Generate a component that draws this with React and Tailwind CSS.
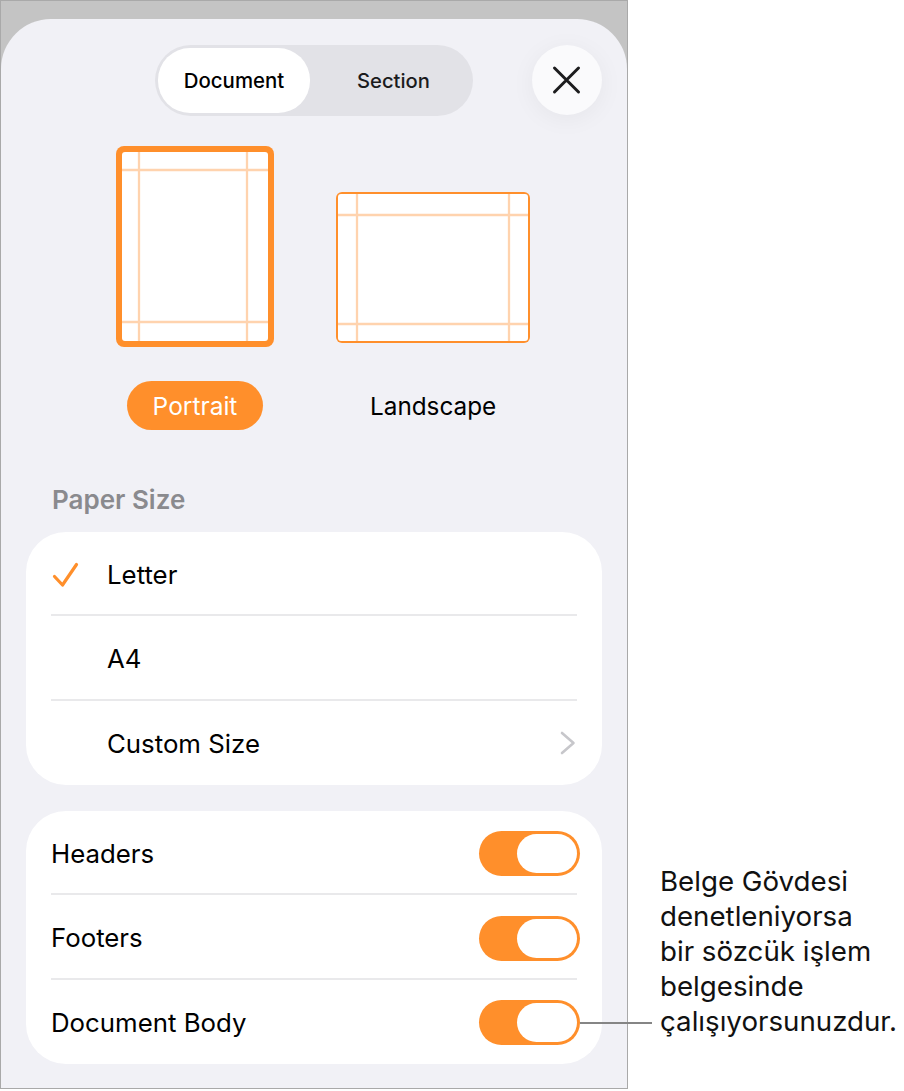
import React from "react";

const ORANGE = "#ff8f2b";
const GUIDE = "#ffd3ae";

function PaperPreview({ width, height, stroke, guidesX, guidesY }) {
  return (
    <svg width={width} height={height} viewBox={`0 0 ${width} ${height}`} className="block">
      <rect x="0" y="0" width={width} height={height} rx={stroke === 6 ? 8 : 6} fill={ORANGE} />
      <rect x={stroke} y={stroke} width={width - stroke * 2} height={height - stroke * 2} rx="3" fill="#fff" />
      {guidesX.map((x) => (
        <line key={x} x1={x} x2={x} y1={stroke} y2={height - stroke} stroke={GUIDE} strokeWidth="2.3" />
      ))}
      {guidesY.map((y) => (
        <line key={y} x1={stroke} x2={width - stroke} y1={y} y2={y} stroke={GUIDE} strokeWidth="2.3" />
      ))}
    </svg>
  );
}

function Toggle() {
  return (
    <div className="mt-[1px] w-[101px] h-[45px] rounded-full bg-[#ff8f2b] flex items-center justify-end pr-[3px]">
      <div className="w-[60px] h-[39px] rounded-full bg-white" />
    </div>
  );
}

function SizeRow({ label, checked, chevron, divider, tall }) {
  return (
    <div className={`relative flex items-center pl-[81px] pr-[25px] ${tall ? "h-[85px]" : "h-[84px]"}`}>
      {checked && (
        <svg width="28" height="26" viewBox="0 0 28 26" className="absolute left-[26px] top-[30px]" fill="none">
          <path d="M2.5 14.5 L10.5 23 L24.5 2.5" stroke={ORANGE} strokeWidth="3.2" strokeLinecap="round" strokeLinejoin="round" />
        </svg>
      )}
      <span className="flex-1 mt-[2px] text-[25.8px] text-black">{label}</span>
      {chevron && (
        <svg width="16" height="24" viewBox="0 0 16 24" fill="none" className="mr-[1px]">
          <path d="M2 2 L13.5 12 L2 22" stroke="#c7c7cb" strokeWidth="2.6" strokeLinecap="round" strokeLinejoin="round" />
        </svg>
      )}
      {divider && <div className="absolute left-[25px] right-[25px] bottom-0 h-[2px] bg-[#e9e9eb]" />}
    </div>
  );
}

function ToggleRow({ label, divider, tall }) {
  return (
    <div className={`relative flex items-center justify-between pl-[25px] pr-[22px] ${tall ? "h-[85px]" : "h-[84px]"}`}>
      <span className="mt-[2px] text-[25.8px] text-black">{label}</span>
      <Toggle />
      {divider && <div className="absolute left-[25px] right-[25px] bottom-0 h-[2px] bg-[#e9e9eb]" />}
    </div>
  );
}

export default function App() {
  return (
    <div className="relative w-[904px] h-[1091px] bg-white overflow-hidden font-['Inter','Liberation_Sans',sans-serif]">
      <div className="w-[628px] h-[1089px] border border-[#a9a9a9] bg-[#c4c4c4] pt-[18px] overflow-hidden">
        <div className="h-[1069px] rounded-t-[50px] bg-[#f1f1f6] px-[25px] pt-[26px]">
          <div className="flex items-start">
            <div className="ml-[129px] w-[318px] h-[71px] rounded-[36px] bg-[#e2e2e7] p-[3px] flex items-center">
              <div className="w-[152px] h-[65px] pt-[2px] rounded-[32px] bg-white flex items-center justify-center text-[20.4px] font-medium text-black">
                Document
              </div>
              <div className="flex-1 flex items-center justify-center pl-[7px] pt-[2px] text-[20.2px] font-medium text-[#1b1b1d]">
                Section
              </div>
            </div>
            <div className="ml-[59px] w-[70px] h-[70px] rounded-full bg-[#fafafc] flex items-center justify-center shadow-[0_4px_24px_rgba(0,0,0,0.05)]">
              <svg width="30" height="30" viewBox="0 0 30 30" fill="none">
                <path d="M2.5 3 L26.5 27 M26.5 3 L2.5 27" stroke="#1c1c1e" strokeWidth="3" strokeLinecap="round" />
              </svg>
            </div>
          </div>

          <div className="flex mt-[30px] ml-[90px] h-[201px] items-end">
            <PaperPreview width={158} height={201} stroke={6} guidesX={[23, 131]} guidesY={[24, 176]} />
            <div className="ml-[62px] mb-[4px]">
              <PaperPreview width={194} height={151} stroke={2} guidesX={[21, 173]} guidesY={[23, 132]} />
            </div>
          </div>

          <div className="flex mt-[34px] h-[49px] items-center">
            <div className="ml-[101px] w-[136px] h-[49px] pt-[2px] rounded-full bg-[#ff8f2b] text-white text-[24.5px] flex items-center justify-center">
              Portrait
            </div>
            <div className="ml-[107px] pt-[2px] text-[24.3px] text-black">Landscape</div>
          </div>

          <div className="mt-[55px] ml-[26px] text-[26px] font-semibold leading-[30px] text-[#8a8a8e]">Paper Size</div>

          <div className="mt-[17px] bg-white rounded-[40px] h-[253px] overflow-hidden">
            <SizeRow label="Letter" checked divider />
            <SizeRow label="A4" divider tall />
            <SizeRow label="Custom Size" chevron />
          </div>

          <div className="mt-[26px] bg-white rounded-[40px] h-[253px] overflow-hidden">
            <ToggleRow label="Headers" divider />
            <ToggleRow label="Footers" divider tall />
            <ToggleRow label="Document Body" />
          </div>
        </div>
      </div>

      <div className="absolute left-[580px] top-[1022px] w-[72px] h-[2px] bg-[#858585]" />
      <div className="absolute left-[660px] top-[864px] text-[27.7px] leading-[35px] text-[#111] whitespace-pre">
        {"Belge Gövdesi\ndenetleniyorsa\nbir sözcük işlem\nbelgesinde\nçalışıyorsunuzdur."}
      </div>
    </div>
  );
}
